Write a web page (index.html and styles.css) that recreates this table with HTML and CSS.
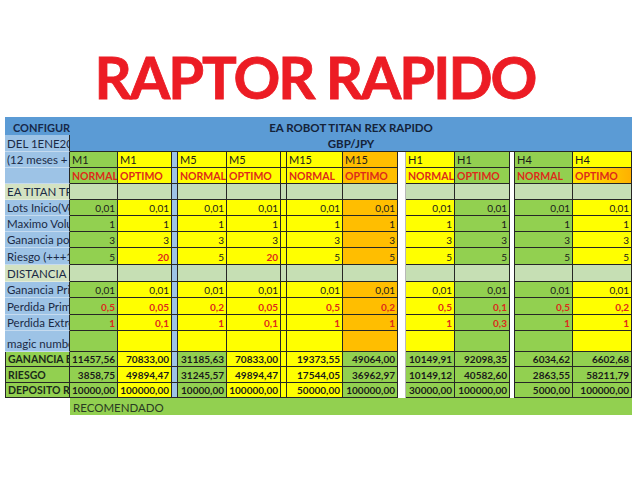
FILE: index.html
```html
<!DOCTYPE html>
<html lang="es">
<head>
<meta charset="utf-8">
<title>RAPTOR RAPIDO</title>
<link rel="stylesheet" href="styles.css">
</head>
<body>
<h1 class="title">RAPTOR RAPIDO</h1>
<table class="sheet">
<colgroup>
<col class="c65"><col class="c48"><col class="c54"><col class="c6"><col class="c49"><col class="c54"><col class="c6"><col class="c56"><col class="c55"><col class="c8"><col class="c49"><col class="c55"><col class="c5"><col class="c58"><col class="c59">
</colgroup>
<tbody>
<tr class="r18">
<td class="band lab-head">CONFIGURACION</td>
<td class="band band-title" colspan="14">EA ROBOT TITAN REX RAPIDO</td>
</tr>
<tr class="r17">
<td class="lb">DEL 1ENE2024</td>
<td class="band band-title band-end" colspan="14">GBP/JPY</td>
</tr>
<tr class="r16">
<td class="lb">(12 meses + 8 dias)</td>
<td class="g hd">M1</td><td class="y hd">M1</td><td class="b gap"></td>
<td class="y hd">M5</td><td class="y hd">M5</td><td class="y gap"></td>
<td class="y hd">M15</td><td class="o hd">M15</td><td class="w gapw"></td>
<td class="y hd">H1</td><td class="g hd">H1</td><td class="w gapd"></td>
<td class="g hd">H4</td><td class="y hd">H4</td>
</tr>
<tr class="r16">
<td class="lb"></td>
<td class="g hd red">NORMAL</td><td class="y hd red">OPTIMO</td><td class="b gap"></td>
<td class="y hd red">NORMAL</td><td class="y hd red">OPTIMO</td><td class="y gap"></td>
<td class="y hd red">NORMAL</td><td class="o hd red">OPTIMO</td><td class="w gapw"></td>
<td class="y hd red">NORMAL</td><td class="g hd red">OPTIMO</td><td class="w gapd"></td>
<td class="g hd red">NORMAL</td><td class="og hd red">OPTIMO</td>
</tr>
<tr class="r16">
<td class="ls">EA TITAN TREX RAPIDO</td>
<td class="s"></td><td class="s"></td><td class="b gap"></td>
<td class="s"></td><td class="s"></td><td class="s gap"></td>
<td class="s"></td><td class="s"></td><td class="w gapw"></td>
<td class="s"></td><td class="s"></td><td class="w gapd"></td>
<td class="s"></td><td class="s"></td>
</tr>
<tr class="r16">
<td class="lb">Lots Inicio(Volumen)</td>
<td class="g num">0,01</td><td class="y num">0,01</td><td class="b gap"></td>
<td class="y num">0,01</td><td class="y num">0,01</td><td class="y gap"></td>
<td class="y num">0,01</td><td class="o num">0,01</td><td class="w gapw"></td>
<td class="y num">0,01</td><td class="g num">0,01</td><td class="w gapd"></td>
<td class="g num">0,01</td><td class="y num">0,01</td>
</tr>
<tr class="r16">
<td class="lb">Maximo Volumen</td>
<td class="g num">1</td><td class="y num">1</td><td class="b gap"></td>
<td class="y num">1</td><td class="y num">1</td><td class="y gap"></td>
<td class="y num">1</td><td class="o num">1</td><td class="w gapw"></td>
<td class="y num">1</td><td class="g num">1</td><td class="w gapd"></td>
<td class="g num">1</td><td class="y num">1</td>
</tr>
<tr class="r16">
<td class="lb">Ganancia por</td>
<td class="g num">3</td><td class="y num">3</td><td class="b gap"></td>
<td class="y num">3</td><td class="y num">3</td><td class="y gap"></td>
<td class="y num">3</td><td class="o num">3</td><td class="w gapw"></td>
<td class="y num">3</td><td class="g num">3</td><td class="w gapd"></td>
<td class="g num">3</td><td class="y num">3</td>
</tr>
<tr class="r17">
<td class="lb">Riesgo (+++1)</td>
<td class="g num">5</td><td class="y num red">20</td><td class="b gap"></td>
<td class="y num">5</td><td class="y num red">20</td><td class="y gap"></td>
<td class="y num">5</td><td class="o num">5</td><td class="w gapw"></td>
<td class="y num">5</td><td class="g num">5</td><td class="w gapd"></td>
<td class="g num">5</td><td class="y num">5</td>
</tr>
<tr class="r17">
<td class="ls">DISTANCIA X</td>
<td class="s"></td><td class="s"></td><td class="b gap"></td>
<td class="s"></td><td class="s"></td><td class="s gap"></td>
<td class="s"></td><td class="s"></td><td class="w gapw"></td>
<td class="s"></td><td class="s"></td><td class="w gapd"></td>
<td class="s"></td><td class="s"></td>
</tr>
<tr class="r16">
<td class="lb">Ganancia Primera</td>
<td class="g num">0,01</td><td class="y num">0,01</td><td class="b gap"></td>
<td class="y num">0,01</td><td class="y num">0,01</td><td class="y gap"></td>
<td class="y num">0,01</td><td class="o num">0,01</td><td class="w gapw"></td>
<td class="y num">0,01</td><td class="g num">0,01</td><td class="w gapd"></td>
<td class="g num">0,01</td><td class="y num">0,01</td>
</tr>
<tr class="r17">
<td class="lb">Perdida Primera</td>
<td class="g num red">0,5</td><td class="y num red">0,05</td><td class="b gap"></td>
<td class="y num red">0,2</td><td class="y num red">0,05</td><td class="y gap"></td>
<td class="y num red">0,5</td><td class="o num red">0,2</td><td class="w gapw"></td>
<td class="y num red">0,5</td><td class="g num red">0,1</td><td class="w gapd"></td>
<td class="g num red">0,5</td><td class="y num red">0,2</td>
</tr>
<tr class="r16">
<td class="lb">Perdida Extrema</td>
<td class="g num red">1</td><td class="y num red">0,1</td><td class="b gap"></td>
<td class="y num red">1</td><td class="y num red">0,1</td><td class="y gap"></td>
<td class="y num red">1</td><td class="o num red">1</td><td class="w gapw"></td>
<td class="y num red">1</td><td class="g num red">0,3</td><td class="w gapd"></td>
<td class="g num red">1</td><td class="y num red">1</td>
</tr>
<tr class="r21">
<td class="lb">magic number</td>
<td class="g"></td><td class="y"></td><td class="b gap"></td>
<td class="y"></td><td class="y"></td><td class="y gap"></td>
<td class="y"></td><td class="o"></td><td class="w gapw"></td>
<td class="y"></td><td class="g"></td><td class="w gapd"></td>
<td class="g"></td><td class="y"></td>
</tr>
<tr class="r15">
<td class="lg">GANANCIA ESTIMADA</td>
<td class="g num bold">11457,56</td><td class="y num bold">70833,00</td><td class="b gap"></td>
<td class="g num bold">31185,63</td><td class="y num bold">70833,00</td><td class="y gap"></td>
<td class="y num bold">19373,55</td><td class="g num bold">49064,00</td><td class="w gapw"></td>
<td class="g num bold">10149,91</td><td class="g num bold">92098,35</td><td class="w gapd"></td>
<td class="g num bold">6034,62</td><td class="g num bold">6602,68</td>
</tr>
<tr class="r16">
<td class="lg">RIESGO</td>
<td class="g num bold">3858,75</td><td class="y num bold">49894,47</td><td class="b gap"></td>
<td class="g num bold">31245,57</td><td class="y num bold">49894,47</td><td class="y gap"></td>
<td class="y num bold">17544,05</td><td class="g num bold">36962,97</td><td class="w gapw"></td>
<td class="g num bold">10149,12</td><td class="g num bold">40582,60</td><td class="w gapd"></td>
<td class="g num bold">2863,55</td><td class="g num bold">58211,79</td>
</tr>
<tr class="r15">
<td class="lg">DEPOSITO RECOMENDADO</td>
<td class="g num bold">10000,00</td><td class="y num bold">100000,00</td><td class="b gap"></td>
<td class="g num bold">10000,00</td><td class="y num bold">100000,00</td><td class="y gap"></td>
<td class="y num bold">50000,00</td><td class="g num bold">100000,00</td><td class="w gapw"></td>
<td class="g num bold">30000,00</td><td class="g num bold">100000,00</td><td class="w gapd"></td>
<td class="g num bold">5000,00</td><td class="g num bold">100000,00</td>
</tr>
<tr class="r17">
<td class="blank"></td>
<td class="rec" colspan="14">RECOMENDADO</td>
</tr>
</tbody>
</table>
</body>
</html>
```
FILE: styles.css
```css
body {
  margin: 0;
  background: #ffffff;
  font-family: Lato, "Liberation Sans", sans-serif;
}

.title {
  margin: 0;
  height: 117px;
  box-sizing: border-box;
  padding: 48px 10px 0 0;
  font-size: 58px;
  line-height: 58px;
  font-weight: 700;
  letter-spacing: -2px;
  color: #ec1c24;
  text-align: center;
  -webkit-text-stroke: 0.8px #ec1c24;
}

.sheet {
  margin-left: 5px;
  width: 627px;
  table-layout: fixed;
  border-collapse: separate;
  border-spacing: 0;
}

.c65 { width: 65px; }
.c48 { width: 48px; }
.c54 { width: 54px; }
.c6 { width: 6px; }
.c49 { width: 49px; }
.c56 { width: 56px; }
.c55 { width: 55px; }
.c8 { width: 8px; }
.c5 { width: 5px; }
.c58 { width: 58px; }
.c59 { width: 59px; }

.r15 { height: 15px; }
.r16 { height: 16px; }
.r17 { height: 17px; }
.r18 { height: 18px; }
.r21 { height: 21px; }

.sheet td {
  padding: 0 2px 1px 2px;
  font-size: 10px;
  line-height: 12px;
  vertical-align: bottom;
  white-space: nowrap;
  overflow: hidden;
  color: #1a1a1a;
  border-right: 1px solid #262626;
  border-bottom: 1px solid #262626;
}

/* top band */
.sheet td.band {
  background: #5b9bd5;
  border-right: none;
  border-bottom: none;
  color: #14233a;
}
.sheet td.lab-head {
  font-weight: 700;
  font-size: 11px;
  padding-left: 8px;
  color: #17294a;
}
.sheet td.band-title {
  font-weight: 700;
  font-size: 11.5px;
  text-align: center;
}
.sheet td.band-end {
  border-bottom: 1px solid #262626;
}

/* label column */
.sheet td.lb,
.sheet td.ls {
  background: #9dc3e6;
  color: #1b2a45;
  font-size: 11.5px;
  border-bottom: 1px solid #c6dbef;
}
.sheet td.ls {
  background: #d3e2c2;
  border-bottom: 1px solid #e4ecd8;
}
.sheet td.lg {
  background: #92d050;
  font-weight: 700;
  font-size: 10.5px;
  color: #1b2a1a;
  border-left: 1px solid #262626;
}
.sheet td.blank {
  border: none;
  background: #ffffff;
}

/* fills */
.g { background: #92d050; }
.y { background: #ffff00; }
.o { background: #ffbe00; }
.og { background: linear-gradient(90deg, #ffe600 0%, #ffc000 75%, #ffb000 100%); }
.b { background: #9dc3e6; }
.s { background: #c6dfb4; }
.w { background: #ffffff; }

.sheet td.gapw {
  border-right: 1px solid #b8b8b8;
  border-bottom: none;
}
.sheet td.gapd {
  border-bottom: none;
}

.sheet td.hd {
  text-align: left;
  font-size: 11px;
}
.num { text-align: right; }
.sheet td.red {
  color: #dd2a1b;
  font-weight: 700;
}
.sheet td.hd.red { font-size: 10.5px; }
.sheet td.bold { font-weight: 700; }

.sheet td.rec {
  background: #92d050;
  border-right: none;
  border-bottom: none;
  font-size: 11.5px;
  color: #2a3a22;
  padding-left: 3px;
}
```
